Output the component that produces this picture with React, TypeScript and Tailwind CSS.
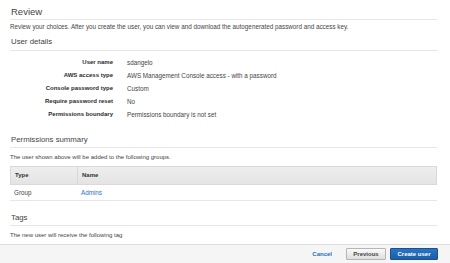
import React from "react";

const details = [
  { label: "User name", value: "sdangelo" },
  { label: "AWS access type", value: "AWS Management Console access - with a password" },
  { label: "Console password type", value: "Custom" },
  { label: "Require password reset", value: "No" },
  { label: "Permissions boundary", value: "Permissions boundary is not set" },
];

const App: React.FC = () => {
  return (
    <div
      className="w-[450px] h-[263px] bg-white flex flex-col overflow-hidden text-[#444]"
      style={{ fontFamily: '"Liberation Sans", Arial, sans-serif' }}
    >
      {/* scrolling content */}
      <div className="flex-1 overflow-hidden pl-[10px] pr-[13px]">
        {/* Review */}
        <div className="h-[20px] pt-[4px] border-b border-[#e6e6e6]">
          <h1 className="text-[9.5px] leading-[15px] pl-[1px] text-[#444]">Review</h1>
        </div>
        <p className="h-[14px] text-[6.3px] leading-[14px] text-[#444]">
          Review your choices. After you create the user, you can view and download the autogenerated password and access key.
        </p>

        {/* User details */}
        <div className="h-[17px] pt-[2px] border-b border-[#e6e6e6]">
          <h2 className="text-[7.8px] leading-[12px] pl-[1px] text-[#444]">User details</h2>
        </div>
        <div className="pt-[5px]">
          {details.map((d) => (
            <div key={d.label} className="flex h-[13px] items-center">
              <div className="w-[103px] text-right font-bold text-[6px] text-[#2b2b2b]">{d.label}</div>
              <div className="ml-[14px] text-[6.3px] text-[#444]">{d.value}</div>
            </div>
          ))}
        </div>

        {/* Permissions summary */}
        <div className="h-[27px] pt-[13px] border-b border-[#e6e6e6]">
          <h2 className="text-[7.8px] leading-[12px] pl-[1px] text-[#444]">Permissions summary</h2>
        </div>
        <p className="h-[18px] text-[6px] leading-[18px] text-[#444]">
          The user shown above will be added to the following groups.
        </p>
        <div className="text-[6px]">
          <div className="flex h-[19px] items-center bg-gradient-to-b from-[#eeeeee] to-[#e4e4e4] border border-[#d9d9d9] font-bold text-[#333]">
            <div className="w-[67px] h-full flex items-center pl-[4px] border-r border-[#d9d9d9]">Type</div>
            <div className="pl-[4px]">Name</div>
          </div>
          <div className="flex h-[16px] items-center border-b border-[#e6e6e6]">
            <div className="w-[67px] pl-[4px] text-[6.3px] text-[#444]">Group</div>
            <div className="pl-[4px] text-[6.3px] text-[#2c74c0]">Admins</div>
          </div>
        </div>

        {/* Tags */}
        <div className="h-[25px] pt-[11px] border-b border-[#e6e6e6]">
          <h2 className="text-[7.8px] leading-[12px] pl-[1px] text-[#444]">Tags</h2>
        </div>
        <p className="h-[18px] text-[6px] leading-[18px] text-[#444]">
          The new user will receive the following tag
        </p>
        <div className="flex h-[10px] border-t border-x border-[#d9d9d9] bg-[#ececec]">
          <div className="w-[112px] border-r border-[#d9d9d9]" />
        </div>
      </div>

      {/* footer */}
      <div className="h-[19px] shrink-0 flex items-center justify-end gap-[4px] pr-[12px] bg-[#f5f5f5] border-t border-[#dcdcdc]">
        <button className="text-[6px] font-bold text-[#1f6fc0] mr-[10px]">Cancel</button>
        <button className="w-[40px] h-[12px] text-[6px] font-bold text-[#444] rounded-[1px] border border-[#b5b5b5] bg-gradient-to-b from-[#fafafa] to-[#dedede]">
          Previous
        </button>
        <button className="w-[48px] h-[12px] text-[6px] font-bold text-white rounded-[1px] border border-[#15528f] bg-gradient-to-b from-[#2a74c2] to-[#1b5fa8]">
          Create user
        </button>
      </div>
    </div>
  );
};

export default App;
